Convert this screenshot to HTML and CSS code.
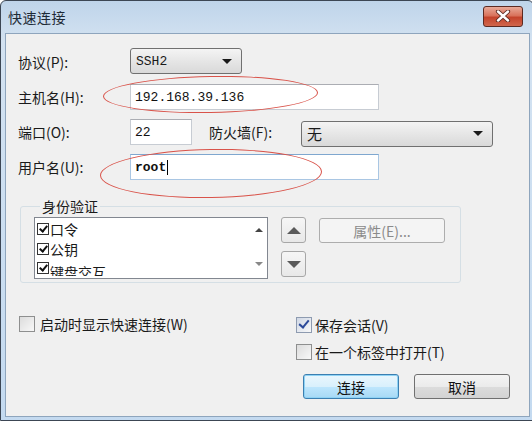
FILE: index.html
```html
<!DOCTYPE html>
<html lang="zh-CN">
<head>
  <meta charset="UTF-8">
  <title>快速连接</title>
  <link rel="stylesheet" href="styles.css">
</head>
<body>

  <!-- Pencere -->
  <div class="window">
    <div class="titlebar">
      <span class="title">快速连接</span>
      <button class="close-btn" title="关闭">
        <svg width="16" height="12" viewBox="0 0 16 12">
          <path d="M3 1.5 L13 10.5 M13 1.5 L3 10.5" stroke="#5a2a22" stroke-width="4.2" stroke-linecap="round"/>
          <path d="M3 1.5 L13 10.5 M13 1.5 L3 10.5" stroke="#ffffff" stroke-width="2.4" stroke-linecap="round"/>
        </svg>
      </button>
    </div>

    <div class="client">
      <!-- Bağlantı bilgileri -->
      <div class="form">
        <label class="lbl">协议(P):</label>
        <div class="row">
          <div class="select select-proto"><span>SSH2</span><i class="arrow"></i></div>
        </div>

        <label class="lbl">主机名(H):</label>
        <div class="row">
          <input class="field field-wide mono" type="text" value="192.168.39.136">
        </div>

        <label class="lbl">端口(O):</label>
        <div class="row">
          <input class="field field-port mono" type="text" value="22">
          <label class="lbl lbl-fw">防火墙(F):</label>
          <div class="select select-fw"><span class="cjk">无</span><i class="arrow"></i></div>
        </div>

        <label class="lbl">用户名(U):</label>
        <div class="row">
          <div class="field field-wide field-focus mono bold">root<span class="caret"></span></div>
        </div>
      </div>

      <!-- Kimlik doğrulama -->
      <fieldset class="group">
        <legend>身份验证</legend>
        <div class="auth-list">
          <div class="items">
            <div class="item"><span class="cb cb-small checked"></span>口令</div>
            <div class="item"><span class="cb cb-small checked"></span>公钥</div>
            <div class="item item-cut"><span class="cb cb-small checked"></span>键盘交互</div>
          </div>
          <div class="scroll">
            <span class="tri-up small"></span>
            <span class="tri-down small"></span>
          </div>
        </div>
        <div class="move-btns">
          <button class="sq-btn"><span class="tri-up"></span></button>
          <button class="sq-btn"><span class="tri-down"></span></button>
        </div>
        <button class="prop-btn" disabled>属性(E)...</button>
      </fieldset>

      <!-- Alt kısım -->
      <div class="bottom">
        <div class="left-col">
          <label class="check"><span class="cb"></span>启动时显示快速连接(W)</label>
        </div>
        <div class="right-col">
          <label class="check"><span class="cb checked blue"></span>保存会话(V)</label>
          <label class="check"><span class="cb"></span>在一个标签中打开(T)</label>
          <div class="actions">
            <button class="btn btn-default">连接</button>
            <button class="btn">取消</button>
          </div>
        </div>
      </div>

      <!-- Kırmızı işaretler -->
      <span class="mark mark-host"></span>
      <span class="mark mark-user"></span>
    </div>
  </div>

</body>
</html>
```

FILE: styles.css
```css
/* Sayfa */
body {
  margin: 0;
  padding: 0;
  background: #ffffff;
  font-family: "Noto Sans CJK SC", "Noto Sans", sans-serif;
  font-size: 14px;
  color: #1a1a1a;
}

/* Pencere çerçevesi */
.window {
  width: 525px;
  height: 416px;
  border: 1px solid #3c4654;
  border-radius: 6px 6px 0 0;
  background: linear-gradient(#bfd4ea, #d3e2f1 40px, #c4daf0);
  padding: 0 3px 3px 4px;
  box-sizing: content-box;
  display: flex;
  flex-direction: column;
}

.titlebar {
  height: 32px;
  display: flex;
  align-items: center;
  justify-content: space-between;
  flex-shrink: 0;
}

.title {
  padding-left: 3px;
  font-size: 14px;
  color: #1e2a36;
  letter-spacing: 0.5px;
}

.close-btn {
  width: 40px;
  height: 21px;
  margin-right: 7px;
  margin-top: -2px;
  border: 1px solid #5c2a22;
  border-radius: 3px;
  background: linear-gradient(#e8a998, #d9735c 45%, #c4442c 55%, #d0664c);
  display: flex;
  align-items: center;
  justify-content: center;
  padding: 0;
}

.client {
  position: relative;
  flex: 1;
  background: #f0f0f0;
  border: 1px solid #8ea5bd;
}

/* Form satırları */
.form {
  display: grid;
  grid-template-columns: 112px 1fr;
  grid-auto-rows: 26px;
  row-gap: 9px;
  padding: 15px 0 0 12px;
  align-items: center;
}

.lbl {
  font-size: 14px;
  white-space: nowrap;
}

.row {
  display: flex;
  align-items: center;
  height: 26px;
}

.mono {
  font-family: "Liberation Mono", "DejaVu Sans Mono", monospace;
  font-size: 13px;
}

.bold {
  font-weight: bold;
}

.cjk {
  font-family: "Noto Sans CJK SC", sans-serif;
  font-size: 15px;
}

.field {
  height: 26px;
  box-sizing: border-box;
  border: 1px solid #c7ccd3;
  border-top-color: #abadb3;
  background: #ffffff;
  padding: 0 4px;
  color: #111;
  display: flex;
  align-items: center;
  outline: none;
}

.field-wide {
  width: 249px;
}

.field-port {
  width: 62px;
}

.field-focus {
  border-color: #a9c6e3;
  border-top-color: #7fa7cf;
}

.caret {
  display: inline-block;
  width: 1px;
  height: 15px;
  background: #000;
  margin-left: 1px;
}

.lbl-fw {
  margin-left: 17px;
  width: 92px;
}

.select {
  height: 26px;
  box-sizing: border-box;
  border: 1px solid #707070;
  border-radius: 3px;
  background: linear-gradient(#f4f4f4, #e6e6e6 50%, #d9d9d9);
  display: flex;
  align-items: center;
  justify-content: space-between;
  padding: 0 9px 0 5px;
  font-family: "Liberation Mono", monospace;
  font-size: 13px;
}

.select-proto {
  width: 112px;
  margin-top: -2px;
}

.select-fw {
  width: 192px;
  margin-top: 3px;
}

.arrow {
  width: 0;
  height: 0;
  border-left: 5px solid transparent;
  border-right: 5px solid transparent;
  border-top: 5px solid #1a1a1a;
}

/* Kimlik doğrulama grubu */
.group {
  margin: 16px 0 0 14px;
  width: 441px;
  height: 87px;
  box-sizing: border-box;
  border: 1px solid #d5dfe5;
  border-radius: 3px;
  padding: 7px 0 0 13px;
  display: flex;
  align-items: flex-start;
}

.group legend {
  padding: 0 2px;
  margin-left: 6px;
  font-size: 14px;
}

.auth-list {
  width: 234px;
  height: 62px;
  box-sizing: border-box;
  border: 1px solid #828790;
  background: #ffffff;
  display: flex;
  overflow: hidden;
  margin-top: -6px;
}

.items {
  flex: 1;
  padding: 1px 0 0 2px;
}

.item {
  display: flex;
  align-items: center;
  height: 20px;
  font-size: 14px;
}

.item-cut {
  height: 17px;
  overflow: hidden;
  align-items: flex-start;
  padding-top: 3px;
  box-sizing: border-box;
}

.scroll {
  width: 17px;
  display: flex;
  flex-direction: column;
  justify-content: space-between;
  align-items: center;
  padding: 10px 0 12px;
}

/* Onay kutuları */
.cb {
  width: 14px;
  height: 14px;
  box-sizing: border-box;
  border: 1px solid #8e8f8f;
  background: linear-gradient(135deg, #dcdcdc, #f8f8f8);
  margin-right: 5px;
  flex-shrink: 0;
  position: relative;
}

.cb-small {
  width: 12px;
  height: 12px;
  margin-right: 1px;
  border-color: #333;
  background: #fff;
}

.cb.checked::after {
  content: "";
  position: absolute;
  left: 3px;
  top: 0px;
  width: 4px;
  height: 8px;
  border: solid #111;
  border-width: 0 2px 2px 0;
  transform: rotate(40deg);
}

.cb-small.checked::after {
  left: 3px;
  top: 0;
  width: 3px;
  height: 6px;
}

.cb.blue {
  border-color: #8e9bb0;
  background: linear-gradient(135deg, #d0d8e6, #f8f8f8);
}

.cb.blue::after {
  border-color: #2c4a9a;
  left: 4px;
  top: 0;
}

.tri-up,
.tri-down {
  width: 0;
  height: 0;
  border-left: 7px solid transparent;
  border-right: 7px solid transparent;
}

.tri-up {
  border-bottom: 7px solid #5a5a5a;
}

.tri-down {
  border-top: 7px solid #5a5a5a;
}

.tri-up.small {
  border-left-width: 4px;
  border-right-width: 4px;
  border-bottom: 4px solid #444;
}

.tri-down.small {
  border-left-width: 4px;
  border-right-width: 4px;
  border-top: 4px solid #888;
}

.move-btns {
  display: flex;
  flex-direction: column;
  gap: 8px;
  margin: -6px 0 0 13px;
}

.sq-btn {
  width: 25px;
  height: 26px;
  border: 1px solid #a7a7a7;
  border-radius: 3px;
  background: linear-gradient(#f6f6f6, #e8e8e8);
  display: flex;
  align-items: center;
  justify-content: center;
  padding: 0;
}

.prop-btn {
  width: 126px;
  height: 25px;
  margin: -5px 0 0 13px;
  border: 1px solid #adadad;
  border-radius: 3px;
  background: #f4f4f4;
  color: #8a8a8a;
  font-family: "Noto Sans CJK SC", sans-serif;
  font-size: 14px;
  padding: 0;
}

/* Alt kısım */
.bottom {
  display: flex;
  margin-top: 32px;
}

.left-col {
  width: 290px;
  padding-left: 13px;
  box-sizing: border-box;
}

.right-col {
  display: flex;
  flex-direction: column;
  gap: 10px;
  padding-top: 1px;
}

.check {
  display: flex;
  align-items: center;
  height: 17px;
  font-size: 14px;
}

.right-col .cb {
  width: 16px;
  height: 16px;
  margin-right: 3px;
}

.left-col .cb {
  width: 16px;
  height: 16px;
  margin-right: 5px;
}

.actions {
  display: flex;
  gap: 15px;
  margin: 4px 0 0 7px;
}

.btn {
  width: 96px;
  height: 25px;
  border: 1px solid #707070;
  border-radius: 3px;
  background: linear-gradient(#f4f4f4, #ebebeb 50%, #dcdcdc 51%, #d3d3d3);
  font-family: "Noto Sans CJK SC", sans-serif;
  font-size: 14px;
  color: #111;
  padding: 0;
}

.btn-default {
  border-color: #3c7fb1;
  box-shadow: inset 0 0 0 1px #8fd3f5;
  background: linear-gradient(#eaf6fd, #d9f0fc 50%, #bee6fd 51%, #a7d9f5);
}

/* Kırmızı elips işaretleri (üstte duran katman) */
.mark {
  position: absolute;
  border: 1.5px solid #d9534a;
  border-radius: 50%;
  pointer-events: none;
}

.mark-host {
  left: 97px;
  top: 42px;
  width: 213px;
  height: 35px;
  transform: rotate(-1deg);
}

.mark-user {
  left: 94px;
  top: 115px;
  width: 220px;
  height: 47px;
  transform: rotate(-1deg);
}
```
